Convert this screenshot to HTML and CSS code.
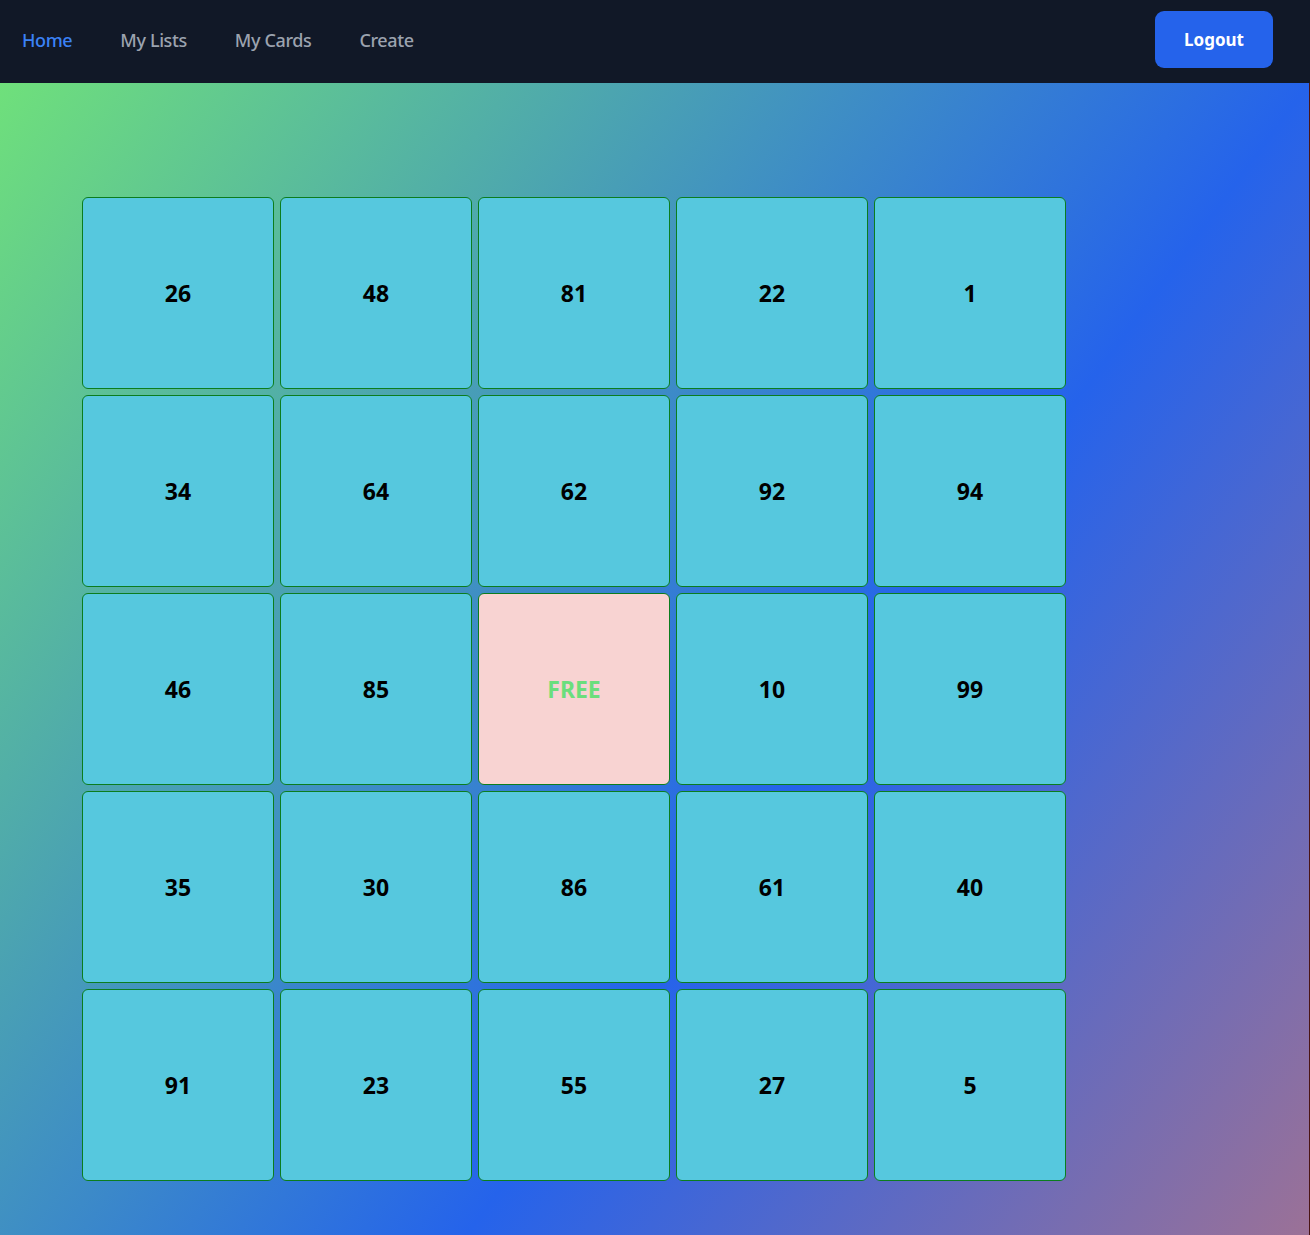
FILE: index.html
```html
<!DOCTYPE html>
<html lang="en">
<head>
<meta charset="utf-8">
<title>Bingo</title>
<link rel="stylesheet" href="styles.css">
</head>
<body>
<nav class="navbar">
  <div class="nav-links">
    <a class="nav-link active" href="#">Home</a>
    <a class="nav-link" href="#">My Lists</a>
    <a class="nav-link" href="#">My Cards</a>
    <a class="nav-link" href="#">Create</a>
  </div>
  <button class="logout">Logout</button>
</nav>
<main class="main">
  <div class="board">
    <div class="cell">26</div><div class="cell">48</div><div class="cell">81</div><div class="cell">22</div><div class="cell">1</div>
    <div class="cell">34</div><div class="cell">64</div><div class="cell">62</div><div class="cell">92</div><div class="cell">94</div>
    <div class="cell">46</div><div class="cell">85</div><div class="cell free">FREE</div><div class="cell">10</div><div class="cell">99</div>
    <div class="cell">35</div><div class="cell">30</div><div class="cell">86</div><div class="cell">61</div><div class="cell">40</div>
    <div class="cell">91</div><div class="cell">23</div><div class="cell">55</div><div class="cell">27</div><div class="cell">5</div>
  </div>
</main>
</body>
</html>
```

FILE: styles.css
```css
* { box-sizing: border-box; }
html, body { margin: 0; padding: 0; }
body {
  font-family: "Noto Sans", "Open Sans", sans-serif;
  background: #111827;
  overflow: hidden;
}
.navbar {
  height: 83px;
  background: #111827;
  display: flex;
  align-items: center;
  justify-content: space-between;
  padding: 0 37px 4px 22px;
}
.nav-links {
  display: flex;
  gap: 48px;
}
.nav-link {
  color: #9ca3af;
  text-decoration: none;
  font-size: 18px;
  font-weight: 500;
  letter-spacing: -0.38px;
}
.nav-link.active { color: #3b82f6; }
.logout {
  width: 118px;
  height: 57px;
  border: none;
  border-radius: 9px;
  background: #2563eb;
  color: #fff;
  font-family: inherit;
  font-size: 17px;
  font-weight: 700;
}
.main {
  height: calc(100vh - 83px);
  background-image: linear-gradient(to bottom right, #6fe07b 0%, #2563eb 50%, #dd7968 100%);
  background-size: 100% 1790px;
  background-repeat: no-repeat;
  background-color: #7f6fb0;
  padding: 114px 0 0 82px;
  border-right: 1px solid #4a1414;
}
.board {
  display: grid;
  grid-template-columns: repeat(5, 192px);
  grid-auto-rows: 192px;
  gap: 6px;
}
.cell {
  background: #56c8de;
  border: 1px solid #0b7d1e;
  border-radius: 6px;
  display: flex;
  align-items: center;
  justify-content: center;
  font-size: 23px;
  font-weight: 700;
  color: #000;
}
.cell.free {
  background: #f8d3d2;
  color: #6bde7c;
}
```
